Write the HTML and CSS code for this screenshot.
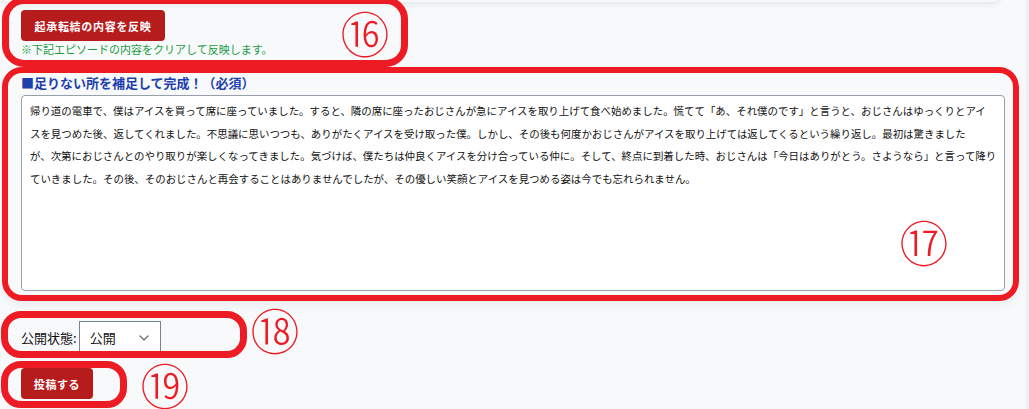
FILE: index.html
```html
<!DOCTYPE html>
<html lang="ja">
<head>
<meta charset="utf-8">
<title>投稿</title>
<link rel="stylesheet" href="styles.css">
</head>
<body>
<div class="page">
  <div class="prev-card"></div>

  <section class="reflect">
    <button class="btn btn-red btn-reflect">起承転結の内容を反映</button>
    <p class="note">※下記エピソードの内容をクリアして反映します。</p>
  </section>

  <section class="complete">
    <h3 class="label">■足りない所を補足して完成！（必須）</h3>
    <textarea class="story" wrap="off">
帰り道の電車で、僕はアイスを買って席に座っていました。すると、隣の席に座ったおじさんが急にアイスを取り上げて食べ始めました。慌てて「あ、それ僕のです」と言うと、おじさんはゆっくりとアイ
スを見つめた後、返してくれました。不思議に思いつつも、ありがたくアイスを受け取った僕。しかし、その後も何度かおじさんがアイスを取り上げては返してくるという繰り返し。最初は驚きました
が、次第におじさんとのやり取りが楽しくなってきました。気づけば、僕たちは仲良くアイスを分け合っている仲に。そして、終点に到着した時、おじさんは「今日はありがとう。さようなら」と言って降り
ていきました。その後、そのおじさんと再会することはありませんでしたが、その優しい笑顔とアイスを見つめる姿は今でも忘れられません。</textarea>
  </section>

  <div class="status">
    <label class="status-label" for="status">公開状態:</label>
    <div class="select-wrap">
      <select id="status" class="select">
        <option>公開</option>
      </select>
      <svg class="chev" width="10" height="6" viewBox="0 0 10 6"><path d="M1 1l4 4 4-4" fill="none" stroke="#6b7280" stroke-width="1.4" stroke-linecap="round" stroke-linejoin="round"/></svg>
    </div>
  </div>

  <button class="btn btn-red btn-post">投稿する</button>

  <div class="mark mark-16"></div>
  <div class="mark mark-17"></div>
  <div class="mark mark-18"></div>
  <div class="mark mark-19"></div>
  <span class="num num-16">⑯</span>
  <span class="num num-17">⑰</span>
  <span class="num num-18">⑱</span>
  <span class="num num-19">⑲</span>
</div>
</body>
</html>
```

FILE: styles.css
```css
* { box-sizing: border-box; }

html, body {
  margin: 0;
  padding: 0;
}

body {
  background: #eff0f3;
  font-family: "Noto Sans CJK JP", "Noto Sans", sans-serif;
  overflow: hidden;
}

.page {
  position: relative;
  width: 1026px;
  height: 409px;
  background: #f8f9fb;
  padding-left: 21px;
  overflow: hidden;
}

.prev-card {
  height: 10px;
  margin-top: -8px;
  margin-left: -21px;
  width: 1000px;
  background: #f8f9fb;
  border-radius: 0 0 8px 8px;
  box-shadow: 0 2px 6px rgba(0, 0, 0, 0.09);
}

.reflect {
  margin-top: 8px;
}

.btn {
  display: block;
  border: none;
  border-radius: 4px;
  font-family: "Noto Sans CJK JP", sans-serif;
  font-weight: 700;
  font-size: 11px;
  color: #ffffff;
  cursor: pointer;
  padding: 0;
}

.btn-red {
  background: #b71c1c;
}

.btn-reflect {
  width: 144px;
  height: 31px;
  letter-spacing: 0.7px;
}

.note {
  margin: 1px 0 0;
  font-size: 11px;
  line-height: 14px;
  color: #179b3f;
}

.complete {
  margin-top: 18px;
}

.label {
  margin: 0;
  font-size: 13px;
  line-height: 18px;
  font-weight: 700;
  color: #1e3fae;
}

.story {
  display: block;
  margin-top: 3px;
  width: 984px;
  height: 196px;
  border: 1px solid #9aa0aa;
  border-radius: 4px;
  background: #ffffff;
  padding: 4px 8px;
  font-family: "Noto Sans CJK JP", sans-serif;
  font-size: 10.45px;
  line-height: 22.7px;
  color: #111111;
  resize: none;
  overflow: hidden;
  white-space: pre;
}

.status {
  margin-top: 30px;
  display: flex;
  align-items: center;
  gap: 2px;
}

.status-label {
  font-size: 13px;
  color: #111111;
}

.select-wrap {
  position: relative;
  width: 82px;
  height: 32px;
}

.select {
  appearance: none;
  -webkit-appearance: none;
  width: 100%;
  height: 100%;
  border: 1px solid #7b8391;
  border-radius: 0;
  background: #ffffff;
  padding: 0 0 0 10px;
  font-family: "Noto Sans CJK JP", sans-serif;
  font-size: 13px;
  color: #111111;
}

.chev {
  position: absolute;
  right: 12px;
  top: 14px;
  pointer-events: none;
}

.btn-post {
  margin-top: 15px;
  width: 72px;
  height: 31px;
  letter-spacing: 0.6px;
}

/* annotation overlays */
.mark {
  position: absolute;
  border: 7px solid #ed1c24;
  border-radius: 22px;
  pointer-events: none;
}

.mark-16 { left: 2px; top: -3px; width: 406px; height: 70px; }
.mark-17 { left: 2px; top: 67px; width: 1017px; height: 234px; border-width: 6px; border-radius: 20px; box-shadow: 0 4px 8px rgba(0, 0, 0, 0.06); }
.mark-18 { left: 1px; top: 311px; width: 246px; height: 47px; border-radius: 20px; }
.mark-19 { left: 1px; top: 361px; width: 126px; height: 47px; border-radius: 20px; }

.num {
  position: absolute;
  width: 52px;
  height: 48px;
  display: flex;
  align-items: center;
  justify-content: center;
  font-family: "Noto Sans CJK JP", sans-serif;
  font-weight: 300;
  font-size: 49px;
  line-height: 48px;
  color: #ed1c24;
}

.num-16 { left: 339px; top: 8px; }
.num-17 { left: 898px; top: 217px; }
.num-18 { left: 249px; top: 305px; }
.num-19 { left: 139px; top: 360px; }
```
